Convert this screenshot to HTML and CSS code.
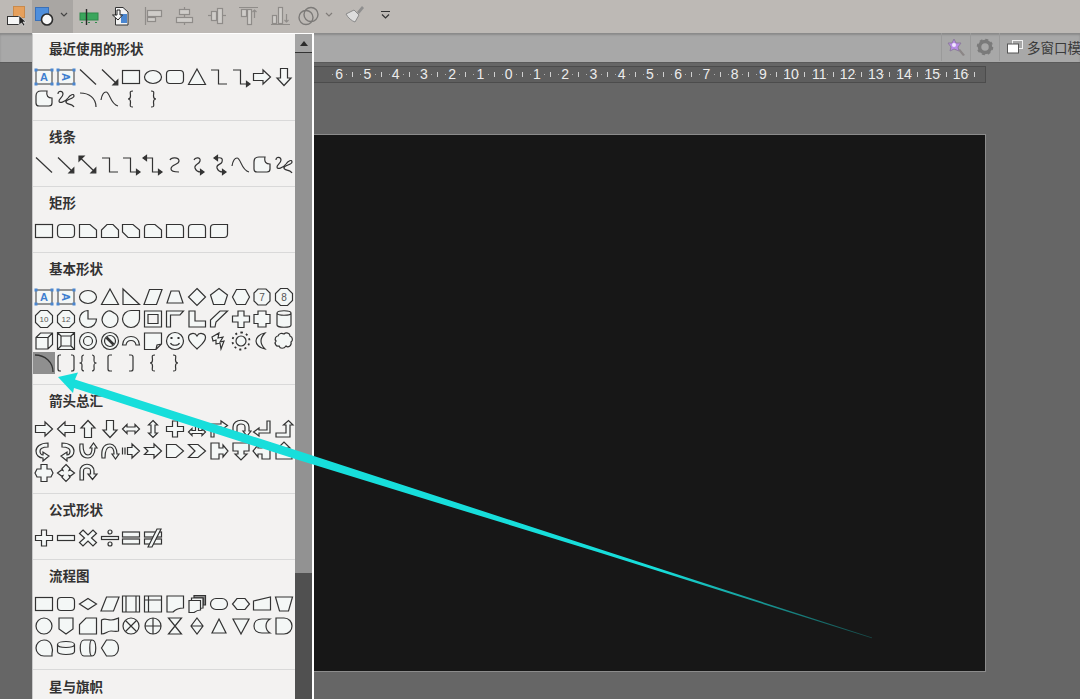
FILE: index.html
```html
<!DOCTYPE html>
<html lang="zh-CN">
    <head>
        <meta charset="UTF-8" />
        <title>形状菜单</title>
        <link rel="stylesheet" href="styles.css">
    </head>
    <body>
        <!-- repeated gallery shapes -->
        <svg class="defs" aria-hidden="true">
            <defs>
                <g id="s-tb">
                    <rect x="3" y="4" width="16" height="14" fill="#f4f7f6" stroke="#555"/>
                    <g fill="#4a86d0" stroke="none">
                        <rect x="1.5" y="2.5" width="3" height="3"/><rect x="17.5" y="2.5" width="3" height="3"/>
                        <rect x="1.5" y="16.5" width="3" height="3"/><rect x="17.5" y="16.5" width="3" height="3"/>
                    </g>
                </g>
                <path id="s-line" fill="none" d="M3 3.500 19 18.500"/>
                <g id="s-larrow"><path fill="none" d="M3 3.500 18 18"/><path fill="#333" d="M18.800 18.800V14L14 18.800z"/></g>
                <rect id="s-rect" x="2.500" y="4.500" width="17" height="13"/>
                <ellipse id="s-ellipse" cx="11" cy="11" rx="8.500" ry="6.500"/>
                <rect id="s-round" x="2.500" y="4.500" width="17" height="13" rx="3.500"/>
                <path id="s-tri" d="M11 3 19.500 18.500H2.500z"/>
                <path id="s-elbow" fill="none" d="M3 4H10.500V18H19"/>
                <g id="s-elbowa"><path fill="none" d="M3 4H10.500V18H18"/><path fill="#333" d="M20 18 16.500 15.500V20.500z"/></g>
                <path id="s-rarrow" d="M2.500 7.500H12V4L19.500 11 12 18V14.500H2.500z"/>
                <path id="s-darrow" d="M7.500 2.500V12H4L11 19.500 18 12H14.500V2.500z"/>
                <path id="s-free" d="M3 8C3 5 5 3 8 3H14C13 8 15 10 19 10V15C19 17 18 18 16 18H6C4 18 3 17 3 15z"/>
                <path id="s-scrib" fill="none" d="M3 6C3 2 8 3 8 6 8 9 4 11 4 13 4 16 10 14 13 10 15 7 19 5 19 8 19 11 11 11 11 14 11 17 17 15 19 19"/>
                <path id="s-arc" fill="none" d="M3 5C12 5 19 10 19 19"/>
                <path id="s-curve" fill="none" d="M2 12C3 6 5 4 7 4 11 4 11 16 19 18"/>
                <path id="s-lbrace" fill="none" d="M13 3C9 3 10.500 5 10.500 8 10.500 10 10 11 8 11 10 11 10.500 12 10.500 14 10.500 17 9 19 13 19"/>
                <path id="s-rbrace" fill="none" d="M9 3C13 3 11.500 5 11.500 8 11.500 10 12 11 14 11 12 11 11.500 12 11.500 14 11.500 17 13 19 9 19"/>
            </defs>
        </svg>

        <div class="toolbar">
            <div class="tool">
                <svg viewBox="0 0 32 33"><rect x="13.500" y="6.500" width="11" height="11" fill="#e6a05c" stroke="#c98a4c"/><rect x="7.500" y="16.500" width="12" height="8" fill="#f6f6f6" stroke="#333"/><path fill="#222" stroke="#eee" stroke-width=".6" d="M19 15.500V25L21.500 23 23.500 26 25 25 23 22H26z"/></svg>
            </div>
            <div class="tool tool-active">
                <svg viewBox="0 0 41 33"><rect x="3.500" y="7.500" width="13" height="13" fill="#4f8fdc" stroke="#3a70b8"/><circle cx="15" cy="19.500" r="5.500" fill="#f8f8f8" stroke="#2c2c2c" stroke-width="1.600"/><path fill="none" stroke="#444" stroke-width="1.200" d="M29 13 32 16 35 13"/></svg>
            </div>
            <div class="tool">
                <svg viewBox="0 0 32 33"><rect x="7" y="13" width="18" height="7" fill="#3aa65c" stroke="#2f8a4b"/><path stroke="#2a2a2a" stroke-width="1.400" d="M13.500 9V25"/><path stroke="#2f8a4b" stroke-dasharray="2 5" d="M8 22.500H25"/></svg>
            </div>
            <div class="tool">
                <svg viewBox="0 0 32 33"><path fill="#f3f3f3" stroke="#333" d="M10.500 7.500H18L23 12V25H10.500z"/><path fill="#4a86d0" d="M16 14H22V23H16z"/><path fill="#f8f8f8" stroke="#222" d="M12 10H15V15H17.500L13 20 7.500 15H12z"/></svg>
            </div>
            <div class="tool tool-off">
                <svg viewBox="0 0 32 33"><path d="M8.500 7V25"/><rect x="10.500" y="10.500" width="14" height="6"/><rect x="10.500" y="17.500" width="8" height="4"/></svg>
            </div>
            <div class="tool tool-off">
                <svg viewBox="0 0 32 33"><path d="M15.500 7V25"/><rect x="10.500" y="9.500" width="10" height="5"/><rect x="7.500" y="17.500" width="16" height="5"/></svg>
            </div>
            <div class="tool tool-off">
                <svg viewBox="0 0 32 33"><path d="M7 15.500H25"/><rect x="10.500" y="11.500" width="5" height="9"/><rect x="16.500" y="8.500" width="5" height="15"/></svg>
            </div>
            <div class="tool tool-off">
                <svg viewBox="0 0 32 33"><path d="M6 7.500H25M21.500 18V10M19.500 12 21.500 10 23.500 12"/><rect x="8.500" y="9.500" width="5" height="7"/><rect x="14.500" y="9.500" width="4" height="15"/></svg>
            </div>
            <div class="tool tool-off">
                <svg viewBox="0 0 32 33"><path d="M6 24.500H25M21.500 14V22M19.500 20 21.500 22 23.500 20"/><rect x="7.500" y="15.500" width="4" height="8"/><rect x="13.500" y="7.500" width="4" height="16"/></svg>
            </div>
            <div class="tool tool-blend">
                <svg viewBox="0 0 22 33"><circle cx="9" cy="17.500" r="7"/><circle cx="14" cy="14.500" r="7"/></svg>
            </div>
            <div class="tool tool-chev">
                <svg viewBox="0 0 20 33"><path fill="none" stroke="#807c79" stroke-width="1.200" d="M7 13 10 16 13 13"/></svg>
            </div>
            <div class="tool">
                <svg viewBox="0 0 32 33"><path fill="#8f8f8f" d="M18 12 23 6 25 8 20 14z"/><path fill="#ddd" stroke="#8a8a8a" d="M7 14 15 10 20 15 16 22C13 21 9 18 7 14z"/></svg>
            </div>
            <div class="tool tool-more">
                <svg viewBox="0 0 28 33"><path fill="none" stroke="#333" stroke-width="1.200" d="M10 11.500H19M11 14.500 14.500 18 18 14.500"/></svg>
            </div>
        </div>

        <div class="subbar">
            <div class="sub-btn sub-icon">
                <svg width="20" height="20" viewBox="0 0 20 20"><path fill="#8b8686" d="M12 13 14 12 19 18 17 19z"/><path fill="#b98be8" stroke="#8d7c9c" d="M8 2 10 6 15 6 12 10 13 14 8 12 4 14 5 10 2 6 6 6z"/><circle cx="8" cy="8" r="2" fill="#f1e6ff"/></svg>
            </div>
            <div class="sub-btn sub-icon">
                <svg width="18" height="18" viewBox="0 0 18 18"><circle cx="9" cy="9" r="5.500" fill="none" stroke="#7a7a7a" stroke-width="3.500"/><circle cx="9" cy="9" r="7.500" fill="none" stroke="#7a7a7a" stroke-width="1.500" stroke-dasharray="3 2.900"/></svg>
            </div>
            <div class="sub-btn sub-text">
                <svg class="sub-glyph" width="16" height="14" viewBox="0 0 16 14"><rect x="5.500" y=".5" width="10" height="8" fill="#a7a7a7" stroke="#f2f2f2"/><rect x=".5" y="4" width="11" height="9" fill="#fff" stroke="#555"/></svg>
                <span>多窗口模</span>
            </div>
        </div>

        <div class="workspace">
            <div class="ruler">
                <span>6</span><span>5</span><span>4</span><span>3</span><span>2</span><span>1</span><span>0</span><span>1</span><span>2</span><span>3</span><span>4</span><span>5</span><span>6</span><span>7</span><span>8</span><span>9</span><span>10</span><span>11</span><span>12</span><span>13</span><span>14</span><span>15</span><span>16</span>
            </div>
            <div class="slide"></div>
        </div>

        <div class="menu">
            <div class="menu-list">
                <div class="section section-first">
                    <div class="section-title">最近使用的形状</div>
                    <div class="shapes">
                        <svg class="shape" viewBox="0 0 22 22"><use href="#s-tb"/><text class="letter" x="11" y="15">A</text></svg>
                        <svg class="shape" viewBox="0 0 22 22"><use href="#s-tb"/><text class="letter" x="11" y="15" transform="rotate(90 11 11)">A</text></svg>
                        <svg class="shape" viewBox="0 0 22 22"><use href="#s-line"/></svg>
                        <svg class="shape" viewBox="0 0 22 22"><use href="#s-larrow"/></svg>
                        <svg class="shape" viewBox="0 0 22 22"><use href="#s-rect"/></svg>
                        <svg class="shape" viewBox="0 0 22 22"><use href="#s-ellipse"/></svg>
                        <svg class="shape" viewBox="0 0 22 22"><use href="#s-round"/></svg>
                        <svg class="shape" viewBox="0 0 22 22"><use href="#s-tri"/></svg>
                        <svg class="shape" viewBox="0 0 22 22"><use href="#s-elbow"/></svg>
                        <svg class="shape" viewBox="0 0 22 22"><use href="#s-elbowa"/></svg>
                        <svg class="shape" viewBox="0 0 22 22"><use href="#s-rarrow"/></svg>
                        <svg class="shape" viewBox="0 0 22 22"><use href="#s-darrow"/></svg>
                        <svg class="shape" viewBox="0 0 22 22"><use href="#s-free"/></svg>
                        <svg class="shape" viewBox="0 0 22 22"><use href="#s-scrib"/></svg>
                        <svg class="shape" viewBox="0 0 22 22"><use href="#s-arc"/></svg>
                        <svg class="shape" viewBox="0 0 22 22"><use href="#s-curve"/></svg>
                        <svg class="shape" viewBox="0 0 22 22"><use href="#s-lbrace"/></svg>
                        <svg class="shape" viewBox="0 0 22 22"><use href="#s-rbrace"/></svg>
                    </div>
                </div>

                <div class="section">
                    <div class="section-title">线条</div>
                    <div class="shapes">
                        <svg class="shape" viewBox="0 0 22 22"><use href="#s-line"/></svg>
                        <svg class="shape" viewBox="0 0 22 22"><use href="#s-larrow"/></svg>
                        <svg class="shape" viewBox="0 0 22 22"><use href="#s-larrow"/><path fill="#333" d="M2 2V7L7 2z"/></svg>
                        <svg class="shape" viewBox="0 0 22 22"><use href="#s-elbow"/></svg>
                        <svg class="shape" viewBox="0 0 22 22"><use href="#s-elbowa"/></svg>
                        <svg class="shape" viewBox="0 0 22 22"><use href="#s-elbowa"/><path fill="#333" d="M1 4 4.500 1.500V6.500z"/></svg>
                        <svg class="shape" viewBox="0 0 22 22"><path fill="none" d="M6 6C7 3 15 3 15 7 15 11 7 10 7 15 7 18 12 18 15 18"/></svg>
                        <svg class="shape" viewBox="0 0 22 22"><path fill="none" d="M8 6C9 3 15 3 14 7 13 11 8 10 9 14 10 17 12 18 15 18"/><path fill="#333" d="M18 18 14.500 15.500V20.500z"/></svg>
                        <svg class="shape" viewBox="0 0 22 22"><path fill="none" d="M9 4C14 3 15 5 14 8 13 11 8 10 9 14 10 17 12 18 15 18"/><path fill="#333" d="M18 18 14.500 15.500V20.500zM6 4 9.500 1.500V6.500z"/></svg>
                        <svg class="shape" viewBox="0 0 22 22"><use href="#s-curve"/></svg>
                        <svg class="shape" viewBox="0 0 22 22"><use href="#s-free"/></svg>
                        <svg class="shape" viewBox="0 0 22 22"><use href="#s-scrib"/></svg>
                    </div>
                </div>

                <div class="section">
                    <div class="section-title">矩形</div>
                    <div class="shapes">
                        <svg class="shape" viewBox="0 0 22 22"><use href="#s-rect"/></svg>
                        <svg class="shape" viewBox="0 0 22 22"><use href="#s-round"/></svg>
                        <svg class="shape" viewBox="0 0 22 22"><path d="M2.500 4.500H13L19.500 10V17.500H2.500z"/></svg>
                        <svg class="shape" viewBox="0 0 22 22"><path d="M8 4.500H14L19.500 10V17.500H2.500V10z"/></svg>
                        <svg class="shape" viewBox="0 0 22 22"><path d="M2.500 4.500H13L19.500 10V17.500H8L2.500 12z"/></svg>
                        <svg class="shape" viewBox="0 0 22 22"><path d="M2.500 8C2.500 5 4 4.500 6 4.500H13L19.500 10V17.500H2.500z"/></svg>
                        <svg class="shape" viewBox="0 0 22 22"><path d="M2.500 4.500H16C18.500 4.500 19.500 6 19.500 8V17.500H2.500z"/></svg>
                        <svg class="shape" viewBox="0 0 22 22"><path d="M6 4.500H16C18.500 4.500 19.500 6 19.500 8V17.500H2.500V8C2.500 6 4 4.500 6 4.500z"/></svg>
                        <svg class="shape" viewBox="0 0 22 22"><path d="M6 4.500H19.500V14C19.500 16 18 17.500 16 17.500H2.500V8C2.500 6 4 4.500 6 4.500z"/></svg>
                    </div>
                </div>

                <div class="section">
                    <div class="section-title">基本形状</div>
                    <div class="shapes">
                        <svg class="shape" viewBox="0 0 22 22"><use href="#s-tb"/><text class="letter" x="11" y="15">A</text></svg>
                        <svg class="shape" viewBox="0 0 22 22"><use href="#s-tb"/><text class="letter" x="11" y="15" transform="rotate(90 11 11)">A</text></svg>
                        <svg class="shape" viewBox="0 0 22 22"><use href="#s-ellipse"/></svg>
                        <svg class="shape" viewBox="0 0 22 22"><use href="#s-tri"/></svg>
                        <svg class="shape" viewBox="0 0 22 22"><path d="M3 3 19.500 18.500H3z"/></svg>
                        <svg class="shape" viewBox="0 0 22 22"><path d="M7.500 3.500H20L14.500 18.500H2z"/></svg>
                        <svg class="shape" viewBox="0 0 22 22"><path d="M7 5H15L19 17H3z"/></svg>
                        <svg class="shape" viewBox="0 0 22 22"><path d="M11 2.500 19.500 11 11 19.500 2.500 11z"/></svg>
                        <svg class="shape" viewBox="0 0 22 22"><path d="M11 2.500 19.500 9 16.500 18.500H5.500L2.500 9z"/></svg>
                        <svg class="shape" viewBox="0 0 22 22"><path d="M6.500 3.500H15.500L19.500 11 15.500 18.500H6.500L2.500 11z"/></svg>
                        <svg class="shape" viewBox="0 0 22 22"><path d="M7 3H15L19 7V15L15 19H7L3 15V7z"/><text class="digit" x="11" y="14.500">7</text></svg>
                        <svg class="shape" viewBox="0 0 22 22"><path d="M7.500 2.500H14.500L19.500 7.500V14.500L14.500 19.500H7.500L2.500 14.500V7.500z"/><text class="digit" x="11" y="14.500">8</text></svg>

                        <svg class="shape" viewBox="0 0 22 22"><path d="M7.500 2.500H14.500L19.500 7.500V14.500L14.500 19.500H7.500L2.500 14.500V7.500z"/><text class="digit digit-sm" x="11" y="14">10</text></svg>
                        <svg class="shape" viewBox="0 0 22 22"><path d="M7.500 2.500H14.500L19.500 7.500V14.500L14.500 19.500H7.500L2.500 14.500V7.500z"/><text class="digit digit-sm" x="11" y="14">12</text></svg>
                        <svg class="shape" viewBox="0 0 22 22"><path d="M11 11V2.500A8.500 8.500 0 1 0 19.500 11z"/></svg>
                        <svg class="shape" viewBox="0 0 22 22"><path d="M9 3C12 2 13 4 15 5 17 6 19 8 19 11A8 8 0 0 1 3 12C3 8 6 4 9 3z"/></svg>
                        <svg class="shape" viewBox="0 0 22 22"><path d="M11 2.500H19.500V11A8.500 8.500 0 1 1 11 2.500z"/></svg>
                        <svg class="shape" viewBox="0 0 22 22"><path d="M2.500 3H19.500V19H2.500zM6 6.500V15.500H16V6.500z"/></svg>
                        <svg class="shape" viewBox="0 0 22 22"><path d="M2.500 3H19.500L16 7H6.500V19H2.500z"/></svg>
                        <svg class="shape" viewBox="0 0 22 22"><path d="M3 3H9V13H19.500V19H3z"/></svg>
                        <svg class="shape" viewBox="0 0 22 22"><path d="M2.500 19V12L12 3H19.500L8 14 7 19z"/></svg>
                        <svg class="shape" viewBox="0 0 22 22"><path d="M8 3H14V8H19.500V14H14V19.500H8V14H2.500V8H8z"/></svg>
                        <svg class="shape" viewBox="0 0 22 22"><path d="M7 3H15V6.500H19V15.500H15V19H7V15.500H3V6.500H7z"/></svg>
                        <svg class="shape" viewBox="0 0 22 22"><path d="M4 5C4 2 18 2 18 5V17C18 20 4 20 4 17zM4 5C4 8 18 8 18 5"/></svg>

                        <svg class="shape" viewBox="0 0 22 22"><path d="M3 7.500 7.500 3H19.500V14.500L15 19H3zM3 7.500H15V19M15 7.500 19.500 3"/></svg>
                        <svg class="shape" viewBox="0 0 22 22"><path d="M2.500 2.500H19.500V19.500H2.500zM6 6H16V16H6zM2.500 2.500 6 6M19.500 2.500 16 6M2.500 19.500 6 16M19.500 19.500 16 16"/></svg>
                        <svg class="shape" viewBox="0 0 22 22"><circle cx="11" cy="11" r="8.500"/><circle cx="11" cy="11" r="4.500"/></svg>
                        <svg class="shape" viewBox="0 0 22 22"><circle cx="11" cy="11" r="8.500"/><circle cx="11" cy="11" r="5.500"/><path fill="none" stroke-width="2.600" d="M7.500 7.500 14.500 14.500"/></svg>
                        <svg class="shape" viewBox="0 0 22 22"><path d="M2.500 15C3 9 7 6.500 11 6.500S19 9 19.500 15H16C15.500 12 13.500 10.500 11 10.500S6.500 12 6 15z"/></svg>
                        <svg class="shape" viewBox="0 0 22 22"><path d="M2.500 3H19.500V14L14 19.500H2.500zM14 19.500 15 15 19.500 14"/></svg>
                        <svg class="shape" viewBox="0 0 22 22"><circle cx="11" cy="11" r="8.500"/><path fill="#333" stroke="none" d="M6.500 7h2v2h-2zM13.500 7h2v2h-2z"/><path fill="none" d="M6.500 13C8 16 14 16 15.500 13"/></svg>
                        <svg class="shape" viewBox="0 0 22 22"><path d="M11 19C7 15 2.500 12 2.500 7.500 2.500 3 9 2 11 6 13 2 19.500 3 19.500 7.500 19.500 12 15 15 11 19z"/></svg>
                        <svg class="shape" viewBox="0 0 22 22"><path d="M4 7 11 3 10 8 15 7 12 12 16 11 13 19 12 13 8 14 8 10 5 11z"/></svg>
                        <svg class="shape" viewBox="0 0 22 22"><circle cx="11" cy="11" r="5"/><path fill="none" stroke-width="1.800" stroke-dasharray="2 3.200" d="M11 2.500A8.500 8.500 0 1 1 10.900 2.500"/></svg>
                        <svg class="shape" viewBox="0 0 22 22"><path d="M14 3C8 4 5 8 5 11S8 18 14 19C11 16 10 14 10 11S11 6 14 3z"/></svg>
                        <svg class="shape" viewBox="0 0 22 22"><path d="M5 6C6 3 9 3 11 4 13 2 17 3 17 6 20 7 20 11 18 12 19 16 15 18 13 16 11 19 7 19 6 16 3 17 1 13 3 11 1 9 3 6 5 6z"/></svg>
                        <svg class="shape shape-selected" viewBox="0 0 22 22"><path fill="none" stroke-width="1.300" d="M2 3C12 3 20 10 20 20"/></svg>
                        <svg class="shape" viewBox="0 0 22 22"><path fill="none" d="M6 3H5C3.500 3 3 3.500 3 5V17C3 18.500 3.500 19 5 19H6M16 3H17C18.500 3 19 3.500 19 5V17C19 18.500 18.500 19 17 19H16"/></svg>
                        <svg class="shape" viewBox="0 0 22 22"><path fill="none" d="M7 3C4 3 5 6 5 8S5 11 2.500 11C5 11 5 12 5 14S4 19 7 19M15 3C18 3 17 6 17 8S17 11 19.500 11C17 11 17 12 17 14S18 19 15 19"/></svg>
                        <svg class="shape" viewBox="0 0 22 22"><path fill="none" d="M13 3H11C9.500 3 9 3.500 9 5V17C9 18.500 9.500 19 11 19H13"/></svg>
                        <svg class="shape" viewBox="0 0 22 22"><path fill="none" d="M9 3H11C12.500 3 13 3.500 13 5V17C13 18.500 12.500 19 11 19H9"/></svg>
                        <svg class="shape" viewBox="0 0 22 22"><use href="#s-lbrace"/></svg>
                        <svg class="shape" viewBox="0 0 22 22"><use href="#s-rbrace"/></svg>
                    </div>
                </div>

                <div class="section section-arrows">
                    <div class="section-title">箭头总汇</div>
                    <div class="shapes">
                        <svg class="shape" viewBox="0 0 22 22"><use href="#s-rarrow"/></svg>
                        <svg class="shape" viewBox="0 0 22 22"><path d="M19.500 7.500H10V4L2.500 11 10 18V14.500H19.500z"/></svg>
                        <svg class="shape" viewBox="0 0 22 22"><path d="M7.500 19.500V10H4L11 2.500 18 10H14.500V19.500z"/></svg>
                        <svg class="shape" viewBox="0 0 22 22"><use href="#s-darrow"/></svg>
                        <svg class="shape" viewBox="0 0 22 22"><path d="M2.500 11 7 6.500V9H15V6.500L19.500 11 15 15.500V13H7V15.500z"/></svg>
                        <svg class="shape" viewBox="0 0 22 22"><path d="M11 2.500 15.500 7H13V15H15.500L11 19.500 6.500 15H9V7H6.500z"/></svg>
                        <svg class="shape" viewBox="0 0 22 22"><path d="M8.500 3H13.500V8.500H19.500V13.500H13.500V19H8.500V13.500H2.500V8.500H8.500z"/></svg>
                        <svg class="shape" viewBox="0 0 22 22"><path d="M2.500 14 6 10.500V12.500H9.500V5H8L11 2.500 14 5H12.500V12.500H16V10.500L19.500 14 16 17.500V15.500H6V17.500z"/></svg>
                        <svg class="shape" viewBox="0 0 22 22"><path d="M3 19V6H13V3L19.500 7.500 13 12V9H6V19z"/></svg>
                        <svg class="shape" viewBox="0 0 22 22"><path d="M3 14V9C3 0 19 0 19 9V13H21L17 18 13 13H15V9C15 5 7 5 7 9V14z"/></svg>
                        <svg class="shape" viewBox="0 0 22 22"><path d="M19 3V15H8V18L2.500 14 8 10V12H16V3z"/></svg>
                        <svg class="shape" viewBox="0 0 22 22"><path d="M3 19V15H13V7H10.500L15.500 2.500 20 7H17V19z"/></svg>

                        <svg class="shape" viewBox="0 0 22 22"><path d="M15 3C7 3 3 7 3 11S6 18 10 18V21L16 16 10 12V15C8 15 7 13 7 11S9 7 15 7z"/></svg>
                        <svg class="shape" viewBox="0 0 22 22"><path d="M7 3C15 3 19 7 19 11S16 18 12 18V21L6 16 12 12V15C14 15 15 13 15 11S13 7 7 7z"/></svg>
                        <svg class="shape" viewBox="0 0 22 22"><path d="M3 4C2 12 4 18 11 18 15 18 18 14 18 8H20L16.500 3 13 8H15C15 12 14 15 11 15 7 15 6 10 6 4z"/></svg>
                        <svg class="shape" viewBox="0 0 22 22"><path d="M3 18C2 10 4 4 11 4 15 4 18 8 18 14H20L16.500 19 13 14H15C15 10 14 7 11 7 7 7 6 12 6 18z"/></svg>
                        <svg class="shape" viewBox="0 0 22 22"><path d="M2.500 7.500V14.500M5 7.500V14.500M7.500 7.500H12V4L19.500 11 12 18V14.500H7.500z"/></svg>
                        <svg class="shape" viewBox="0 0 22 22"><path d="M2.500 7.500H12V4L19.500 11 12 18V14.500H2.500L6 11z"/></svg>
                        <svg class="shape" viewBox="0 0 22 22"><path d="M2.500 4.500H12L19.500 11 12 17.500H2.500z"/></svg>
                        <svg class="shape" viewBox="0 0 22 22"><path d="M2.500 4.500H12L19.500 11 12 17.500H2.500L9 11z"/></svg>
                        <svg class="shape" viewBox="0 0 22 22"><path d="M3 3H11V8H15V5L20 11 15 17V14H11V19H3z"/></svg>
                        <svg class="shape" viewBox="0 0 22 22"><path d="M3 3H19V11H14V14H17L11 20 5 14H8V11H3z"/></svg>
                        <svg class="shape" viewBox="0 0 22 22"><path d="M19 3H11V8H7V5L2 11 7 17V14H11V19H19z"/></svg>
                        <svg class="shape" viewBox="0 0 22 22"><path d="M3 19V11H8V8H5L11 2 17 8H14V11H19V19z"/></svg>

                        <svg class="shape" viewBox="0 0 22 22"><path d="M8 2.500H14V7H18L20 11 18 15H14V19.500H8V15H4L2 11 4 7H8z"/></svg>
                        <svg class="shape" viewBox="0 0 22 22"><path d="M11 2.500 15 6.500 14 8.500 15.500 8 19.500 11 15.500 14 14 13.500 15 15.500 11 19.500 7 15.500 8 13.500 6.500 14 2.500 11 6.500 8 8 8.500 7 6.500z"/></svg>
                        <svg class="shape" viewBox="0 0 22 22"><path d="M3 18V9C3 0 17 0 17 9V12H20L15.500 17.500 11 12H13.500V9C13.500 5 6.500 5 6.500 9V18z"/></svg>
                    </div>
                </div>

                <div class="section">
                    <div class="section-title">公式形状</div>
                    <div class="shapes">
                        <svg class="shape" viewBox="0 0 22 22"><path d="M8.500 3H13.500V8.500H19.500V13.500H13.500V19H8.500V13.500H2.500V8.500H8.500z"/></svg>
                        <svg class="shape" viewBox="0 0 22 22"><rect x="2.500" y="8.500" width="17" height="5"/></svg>
                        <svg class="shape" viewBox="0 0 22 22"><path d="M6 3 11 8 16 3 19.500 6.500 14.500 11 19.500 15.500 16 19 11 14 6 19 2.500 15.500 7.500 11 2.500 6.500z"/></svg>
                        <svg class="shape" viewBox="0 0 22 22"><rect x="2.500" y="9.500" width="17" height="3"/><circle cx="11" cy="5" r="2"/><circle cx="11" cy="17" r="2"/></svg>
                        <svg class="shape" viewBox="0 0 22 22"><rect x="2.500" y="5" width="17" height="5"/><rect x="2.500" y="12" width="17" height="5"/></svg>
                        <svg class="shape" viewBox="0 0 22 22"><rect x="2.500" y="5" width="17" height="5"/><rect x="2.500" y="12" width="17" height="5"/><path d="M6 20 15 2H19L10 20z"/></svg>
                    </div>
                </div>

                <div class="section">
                    <div class="section-title">流程图</div>
                    <div class="shapes">
                        <svg class="shape" viewBox="0 0 22 22"><use href="#s-rect"/></svg>
                        <svg class="shape" viewBox="0 0 22 22"><use href="#s-round"/></svg>
                        <svg class="shape" viewBox="0 0 22 22"><path d="M11 5.500 19.500 11 11 16.500 2.500 11z"/></svg>
                        <svg class="shape" viewBox="0 0 22 22"><path d="M7.500 4H20L14.500 18H2z"/></svg>
                        <svg class="shape" viewBox="0 0 22 22"><path d="M2.500 3H19.500V19H2.500zM6 3V19M16 3V19"/></svg>
                        <svg class="shape" viewBox="0 0 22 22"><path d="M2.500 3H19.500V19H2.500zM2.500 7H19.500M6.500 3V19"/></svg>
                        <svg class="shape" viewBox="0 0 22 22"><path d="M3 3H19.500V15C15 15 12 16 9 19H3z"/></svg>
                        <svg class="shape" viewBox="0 0 22 22"><path fill="#8a8a8a" d="M8 2.500H19.500V12H17V5H8z"/><path d="M5.500 5H17V15C14 15 13 16 11 17H5.500z"/><path d="M3 7.500H14.500V17C12 17 10 18 8 19.500H3z"/></svg>
                        <svg class="shape" viewBox="0 0 22 22"><rect x="2.500" y="5.500" width="17" height="11" rx="5.500"/></svg>
                        <svg class="shape" viewBox="0 0 22 22"><path d="M7 5.500H15L19.500 11 15 16.500H7L2.500 11z"/></svg>
                        <svg class="shape" viewBox="0 0 22 22"><path d="M2.500 8 19.500 4V17H2.500z"/></svg>
                        <svg class="shape" viewBox="0 0 22 22"><path d="M2.500 4H19.500L15.500 18H6.500z"/></svg>

                        <svg class="shape" viewBox="0 0 22 22"><circle cx="11" cy="11" r="8"/></svg>
                        <svg class="shape" viewBox="0 0 22 22"><path d="M4 3H18V14L11 19 4 14z"/></svg>
                        <svg class="shape" viewBox="0 0 22 22"><path d="M9 3H19.500V19H2.500V9.500z"/></svg>
                        <svg class="shape" viewBox="0 0 22 22"><path d="M2.500 5V19C7 19 8 16 12 16 15 16 17 17 19.500 16V3C17 4 15 5 12 5 8 5 6 3 2.500 5z"/></svg>
                        <svg class="shape" viewBox="0 0 22 22"><circle cx="11" cy="11" r="8"/><path d="M5.500 5.500 16.500 16.500M16.500 5.500 5.500 16.500"/></svg>
                        <svg class="shape" viewBox="0 0 22 22"><circle cx="11" cy="11" r="8"/><path d="M3 11H19M11 3V19"/></svg>
                        <svg class="shape" viewBox="0 0 22 22"><path d="M4.500 3H17.500L4.500 19H17.500z"/></svg>
                        <svg class="shape" viewBox="0 0 22 22"><path d="M11 3 17 11 11 19 5 11zM5 11H17"/></svg>
                        <svg class="shape" viewBox="0 0 22 22"><path d="M11 4 18 18H4z"/></svg>
                        <svg class="shape" viewBox="0 0 22 22"><path d="M3 4H19L11 19z"/></svg>
                        <svg class="shape" viewBox="0 0 22 22"><path d="M19 4H11C6 4 3 7 3 11S6 18 11 18H19C16 16 15 14 15 11S16 6 19 4z"/></svg>
                        <svg class="shape" viewBox="0 0 22 22"><path d="M3 3H11C16 3 19 7 19 11S16 19 11 19H3z"/></svg>

                        <svg class="shape" viewBox="0 0 22 22"><path d="M11 3A8 8 0 1 0 11 19H19V16.500C20 13 19.500 3 11 3z"/></svg>
                        <svg class="shape" viewBox="0 0 22 22"><path d="M2.500 7.500C2.500 3.500 19.500 3.500 19.500 7.500V14.500C19.500 18.500 2.500 18.500 2.500 14.500zM2.500 7.500C2.500 11.500 19.500 11.500 19.500 7.500"/></svg>
                        <svg class="shape" viewBox="0 0 22 22"><path d="M7 3H15C20 3 20 19 15 19H7C2 19 2 3 7 3zM15 3C12 3 12 19 15 19"/></svg>
                        <svg class="shape" viewBox="0 0 22 22"><path d="M7.500 3H13C17 3 19.500 7 19.500 11S17 19 13 19H7.500L2.500 11z"/></svg>
                    </div>
                </div>

                <div class="section section-last">
                    <div class="section-title">星与旗帜</div>
                </div>
            </div>

            <div class="scrollbar">
                <div class="scroll-up"><span class="scroll-tri"></span></div>
                <div class="scroll-thumb"></div>
                <div class="scroll-track"></div>
            </div>
        </div>

        <svg class="annotation" viewBox="0 0 1080 699" aria-hidden="true">
            <defs>
                <linearGradient id="fade" gradientUnits="userSpaceOnUse" x1="660" y1="570" x2="872" y2="638">
                    <stop offset="0" stop-color="#17dedb"/>
                    <stop offset="1" stop-color="#17dedb" stop-opacity=".25"/>
                </linearGradient>
            </defs>
            <path fill="url(#fade)" d="M58 377 78 372.500 75 379.500 300 451.500 600 549.300 872 637.600V638.200L600 552.800 300 460.500 74 388 73 393z"/>
        </svg>
    </body>
</html>
```

FILE: styles.css
```css
* {
    box-sizing: border-box;
}
html, body {
    height: 100%;
}
body {
    margin: 0;
    height: 699px;
    overflow: hidden;
    background-color: #666666;
    font-family: "Liberation Sans", "Noto Sans CJK SC", sans-serif;
    position: relative;
}
.defs {
    position: absolute;
    width: 0;
    height: 0;
}

/* top toolbar */
.toolbar {
    display: flex;
    height: 33px;
    background-color: #bdb9b5;
}
.tool {
    width: 32px;
    height: 33px;
    flex-shrink: 0;
}
.tool svg {
    display: block;
    width: 100%;
    height: 100%;
}
.tool-active {
    width: 41px;
    background-color: #a9a6a3;
}
.tool-blend {
    width: 22px;
}
.tool-chev {
    width: 20px;
}
.tool-more {
    width: 28px;
}
.tool-off svg {
    fill: #cfccc9;
    stroke: #8f8c89;
    stroke-width: 1.2;
}
.tool-blend svg {
    fill: none;
    stroke: #7c7a78;
    stroke-width: 1.4;
}

/* grey bar under the toolbar */
.subbar {
    display: flex;
    justify-content: flex-end;
    height: 30px;
    padding-bottom: 1px;
    background-color: #a8a8a8;
    border-bottom: 1px solid #5a5a5a;
    box-shadow: inset 0 2px 2px rgba(0, 0, 0, 0.18);
}
.sub-btn {
    display: flex;
    align-items: center;
    justify-content: center;
    border-left: 1px solid #9a9a9a;
}
.sub-icon {
    width: 29px;
}
.sub-text {
    width: 81px;
    justify-content: flex-start;
    gap: 4px;
    padding-left: 7px;
    white-space: nowrap;
    font-size: 13.5px;
    color: #3a3a3a;
}
.sub-glyph {
    flex-shrink: 0;
}

/* ruler and slide */
.workspace {
    padding: 3px 94px 0 300px;
}
.ruler {
    display: flex;
    height: 17px;
    padding-left: 24px;
    background-color: #5e5e5e;
    border: 1px solid #4c4c4c;
}
.ruler span {
    width: 28.25px;
    flex-shrink: 0;
    text-align: center;
    line-height: 15px;
    font-size: 14px;
    color: #ececec;
    background-image:
        linear-gradient(#cfcfcf, #cfcfcf),
        linear-gradient(#b0b0b0, #b0b0b0),
        linear-gradient(#b0b0b0, #b0b0b0);
    background-repeat: no-repeat;
    background-size: 1px 5px, 1px 1px, 1px 1px;
    background-position: right 0 top 5px, left 7px top 7px, right 6px top 7px;
}
.slide {
    height: 538px;
    margin-top: 51px;
    background-color: #171717;
    border: 1px solid #8c8c8c;
}

/* shape gallery, drops over the page */
.menu {
    position: absolute;
    left: 32px;
    top: 33px;
    width: 282px;
    height: 666px;
    display: flex;
    overflow: hidden;
    background-color: #f3f2f1;
    border-top: 1px solid #ffffff;
    border-left: 1px solid #c9c9c9;
    border-right: 2px solid #ffffff;
}
.menu-list {
    width: 262px;
    flex-shrink: 0;
}
.section {
    padding: 6px 0 10px 0;
    border-top: 1px solid #d9d9d9;
}
.section-first {
    border-top: none;
    padding: 5px 0 10px 0;
}
.section-arrows {
    padding-bottom: 9px;
}
.section-last {
    padding-top: 7px;
    padding-bottom: 0;
}
.section-title {
    height: 22px;
    margin-bottom: 5px;
    padding-left: 16px;
    line-height: 22px;
    font-size: 13.5px;
    font-weight: bold;
    color: #333333;
}
.shapes {
    display: grid;
    grid-template-columns: repeat(12, 21.85px);
    grid-auto-rows: 22px;
}
.shape {
    display: block;
    width: 22px;
    height: 22px;
    fill: #f4f7f6;
    stroke: #333333;
    stroke-width: 1.2;
}
.shape-selected {
    background-color: #8f8f8f;
}
.letter {
    fill: #3f7fcf;
    stroke: none;
    font-size: 11px;
    font-weight: bold;
    text-anchor: middle;
}
.digit {
    fill: #555555;
    stroke: none;
    font-size: 10px;
    text-anchor: middle;
}
.digit-sm {
    font-size: 8px;
}

/* gallery scrollbar */
.scrollbar {
    width: 17px;
    flex-shrink: 0;
    display: flex;
    flex-direction: column;
    background-color: #505050;
}
.scroll-up {
    height: 19px;
    display: flex;
    align-items: center;
    justify-content: center;
    background-color: #a4a4a4;
    border-bottom: 1px solid #333333;
}
.scroll-tri {
    width: 0;
    height: 0;
    border-left: 4px solid transparent;
    border-right: 4px solid transparent;
    border-bottom: 5px solid #2b2b2b;
}
.scroll-thumb {
    height: 520px;
    background-color: #929292;
}
.scroll-track {
    flex: 1;
}

/* cyan annotation arrow painted on top */
.annotation {
    position: absolute;
    left: 0;
    top: 0;
    width: 1080px;
    height: 699px;
}
```
